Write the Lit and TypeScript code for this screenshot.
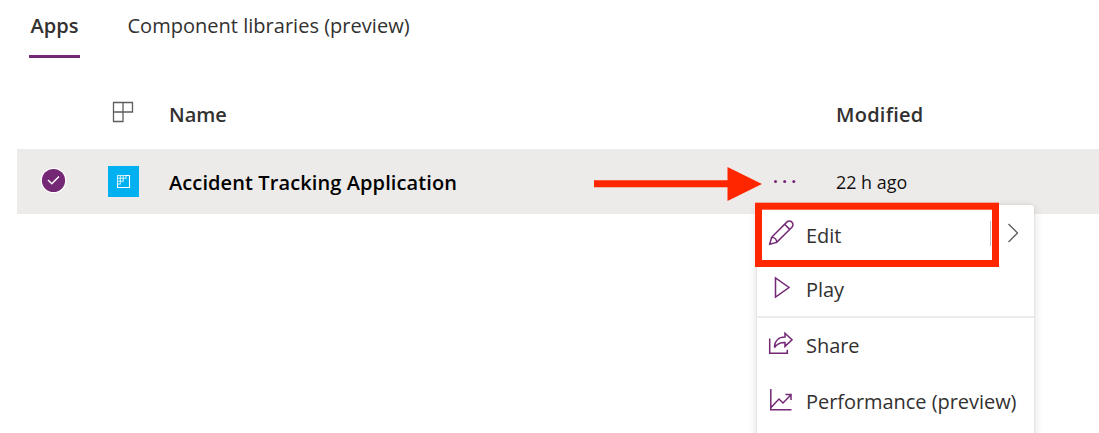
import { LitElement, html, css } from "lit";
import { customElement } from "lit/decorators.js";

@customElement("app-menu")
class AppMenu extends LitElement {
  static styles = css`
    :host { display: block; box-sizing: border-box; width: 277px; height: 260px; background: #fff; border-radius: 3px; box-shadow: 0 3px 11px rgba(0, 0, 0, 0.13), 0 0 3px rgba(0, 0, 0, 0.1); color: #323130; font-size: 20px; }
    .item { display: flex; align-items: center; height: 56px; padding-left: 11px; box-sizing: border-box; }
    .edit { height: 60px; }
    .play { height: 51px; padding-bottom: 4px; }
    .icon { width: 26px; height: 26px; margin-right: 12px; flex: none; fill: none; stroke: #742774; stroke-width: 1.5; }
    .label { white-space: nowrap; letter-spacing: -0.05px; }
    .edit .label { padding-top: 1px; }
    .play .label { padding-top: 3px; }
    .bar { width: 1px; height: 25px; background: #c0bebc; margin: 0 16px 3px auto; }
    .chev { width: 13px; height: 20px; margin: 0 14px 4px 0; fill: none; stroke: #605e5c; stroke-width: 1.3; }
    .line { height: 2px; background: #edebe9; }
    .up { margin-bottom: 4px; }
    .up1 { margin-bottom: 2px; }
    .share .label, .perf .label { padding-bottom: 1px; }
  `;
  render() {
    return html`
      <div class="item edit">
        <svg class="icon up" viewBox="0 0 26 26"><path d="M1.700 24.300 3.600 17.300 18.800 2.100a3.600 3.600 0 0 1 5.100 5.100L8.700 22.400Z M16.600 4.300l5.100 5.100 M3.600 17.300c3 0 5.100 2.100 5.100 5.100" /></svg>
        <span class="label">Edit</span><span class="bar"></span>
        <svg class="chev" viewBox="0 0 13 20"><path d="M1.500 1 10.500 10 1.500 19" /></svg>
      </div>
      <div class="item play">
        <svg class="icon up" viewBox="0 0 26 26"><path d="M7.500 4v19L21 13.500Z" /></svg><span class="label">Play</span>
      </div>
      <div class="line"></div>
      <div class="item share">
        <svg class="icon up1" viewBox="0 0 26 26"><path d="M1.700 6.500v14.700h17.600v-3.500 M17 1.200l7 6.600-7 6.600v-4c-5 0-8.500 1.500-10.500 5.200 0-7 4.500-10.500 10.500-10.500Z" /></svg><span class="label">Share</span>
      </div>
      <div class="item perf">
        <svg class="icon up1" viewBox="0 0 26 26"><path d="M2.800 1v20.800H23.500 M3 19.500l8-8.500 4 4L23 6.800 M17.500 6.500h5.500v5.500" /></svg><span class="label">Performance (preview)</span>
      </div>`;
  }
}

@customElement("app-root")
class AppRoot extends LitElement {
  static styles = css`
    :host { display: block; position: relative; width: 1099px; height: 433px; overflow: hidden; background: #fff; font-family: "Open Sans", "Noto Sans", sans-serif; font-size: 20px; line-height: 28px; color: #323130; }
    .tabs { display: flex; padding-left: 29px; height: 59px; }
    .tab { box-sizing: border-box; padding-top: 12px; height: 58px; white-space: nowrap; letter-spacing: 0.02px; }
    .on { width: 51px; border-bottom: 3px solid #742774; font-weight: 600; text-align: center; margin-right: 47.500px; }
    .row { display: grid; grid-template-columns: 91px 61px 603px 64px 1fr; margin-left: 17px; height: 64.500px; align-items: center; white-space: nowrap; }
    .head { height: 90px; padding-top: 22px; box-sizing: border-box; font-weight: 600; }
    .sel { background: #edebe9; color: #000; }
    .name { font-weight: 600; padding-top: 3px; letter-spacing: 0.1px; }
    .mod { letter-spacing: 0.25px; }
    .ago { font-size: 17.900px; padding-top: 2px; color: #111; }
    svg { display: block; }
    .comp { margin: 0 0 6px 4px; }
    .check { margin: 0 0 1px 23px; }
    .dots { margin: 1px 0 0 1px; }
    .menu { position: absolute; left: 757px; top: 205px; }
    .note { position: absolute; inset: 0; }
  `;
  render() {
    return html`
      <div class="tabs"><div class="tab on">Apps</div><div class="tab">Component libraries (preview)</div></div>
      <div class="row head">
        <span></span>
        <svg class="comp" width="22" height="22" fill="none" stroke="#605e5c" stroke-width="1.300"><path d="M1.500 1.500H20.500V11H1.500Z M1.500 11V20.500H11V1.500" /></svg>
        <span>Name</span><span></span><span class="mod">Modified</span>
      </div>
      <div class="row sel">
        <svg class="check" width="27" height="27"><circle cx="13.500" cy="13.500" r="12.800" fill="#fff" /><circle cx="13.500" cy="13.500" r="11.600" fill="#742774" /><path d="M8 13 11.800 16.700 19 9.500" fill="none" stroke="#fff" stroke-width="1.500" /></svg>
        <svg width="31" height="31"><rect width="31" height="31" fill="#00b0f0" /><g fill="none" stroke="#fff" stroke-width="1.100"><path d="M9.500 17.500V21.500H21.500V9.500H18" /><path d="M9.500 9.500H18V12.300H15.200V15.200H12.300V18H9.500Z M12.300 9.500V15.200 M15.200 9.500V12.300 M9.500 12.300H15.200 M9.500 15.200H12.300" stroke-opacity="0.800" /></g></svg>
        <span class="name">Accident Tracking Application</span>
        <svg class="dots" width="26" height="6" fill="#742774"><circle cx="2.500" cy="2.500" r="1.500" /><circle cx="11.700" cy="2.500" r="1.500" /><circle cx="20.800" cy="2.500" r="1.500" /></svg>
        <span class="ago">22 h ago</span>
      </div>
      <app-menu class="menu"></app-menu>
      <svg class="note" width="1099" height="433"><path d="M594 180.300H727.500V167L762 184 727.500 201V187.300H594Z" fill="#ff2600" /><rect x="758.500" y="206.200" width="237" height="57.300" fill="none" stroke="#ff2600" stroke-width="7" /></svg>`;
  }
}
